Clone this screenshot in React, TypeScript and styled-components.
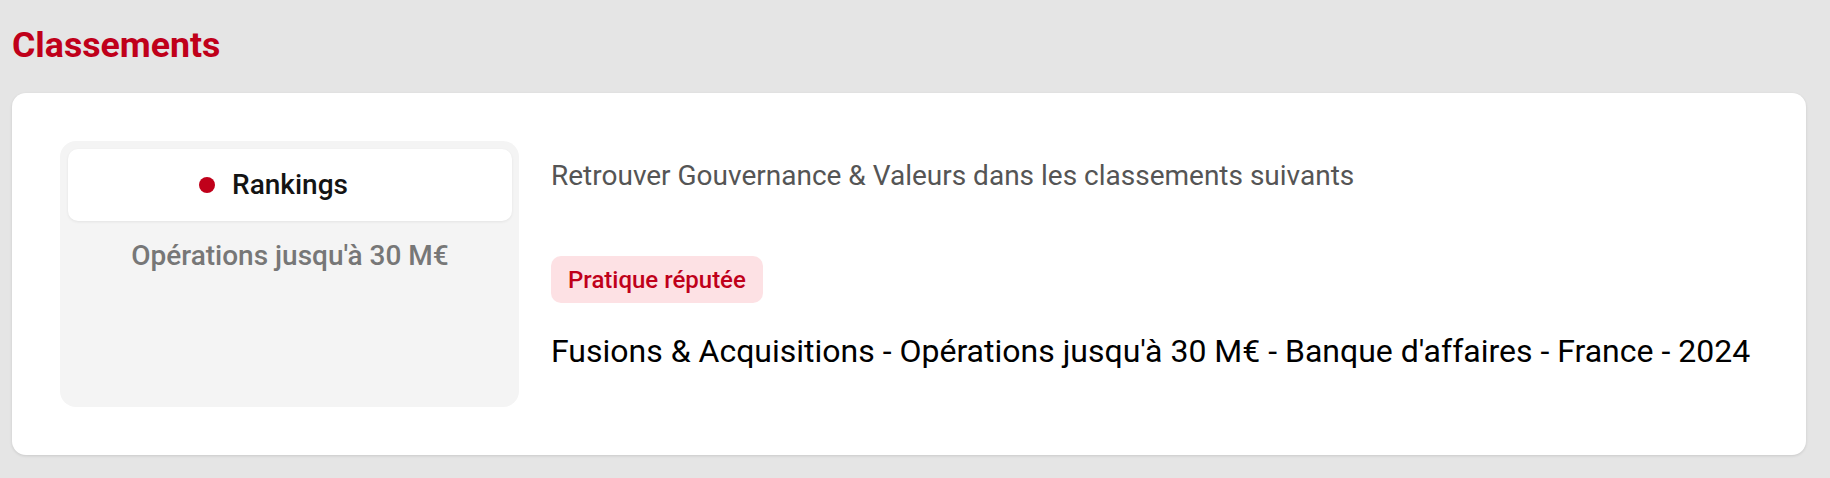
import styled, { createGlobalStyle } from "styled-components";

const GlobalStyle = createGlobalStyle`
  html, body {
    margin: 0;
    padding: 0;
    background: #e5e5e5;
    font-family: Roboto, "Liberation Sans", Arial, sans-serif;
  }
`;

const Page = styled.div`
  padding: 24px 24px 23px 12px;
`;

const Title = styled.h2`
  margin: 0 0 27px;
  font-size: 35.7px;
  line-height: 42px;
  font-weight: 700;
  color: #c0001a;
`;

const Card = styled.section`
  background: #fff;
  border-radius: 14px;
  box-shadow: 0 1px 3px rgba(0, 0, 0, 0.12);
  padding: 48px;
  display: flex;
  gap: 32px;
`;

const Panel = styled.div`
  flex: 0 0 459px;
  box-sizing: border-box;
  min-height: 266px;
  background: #f4f4f4;
  border-radius: 16px;
  padding: 8px 7px 8px 8px;
  display: flex;
  flex-direction: column;
  align-items: stretch;
`;

const PanelHead = styled.div`
  height: 72px;
  background: #fff;
  border-radius: 10px;
  box-shadow: 0 1px 3px rgba(0, 0, 0, 0.07);
  display: flex;
  align-items: center;
  justify-content: center;
`;

const HeadLabel = styled.span`
  position: relative;
  font-size: 28px;
  line-height: 34px;
  font-weight: 500;
  color: #141414;

  &::before {
    content: "";
    position: absolute;
    left: -33px;
    top: 9px;
    width: 16px;
    height: 16px;
    border-radius: 50%;
    background: #c0001a;
  }
`;

const PanelSub = styled.div`
  margin-top: 18px;
  text-align: center;
  font-size: 28px;
  line-height: 34px;
  font-weight: 500;
  color: #777;
`;

const Content = styled.div`
  flex: 1;
  padding-top: 18px;
  display: flex;
  flex-direction: column;
  align-items: flex-start;
`;

const Intro = styled.p`
  margin: 0;
  font-size: 28px;
  line-height: 34px;
  color: #555;
`;

const Tag = styled.span`
  margin-top: 63px;
  padding: 10px 17px 9px;
  border-radius: 10px;
  background: #fde1e4;
  color: #c0001a;
  font-size: 24px;
  line-height: 28px;
  font-weight: 500;
`;

const Entry = styled.p`
  margin: 29px 0 0;
  font-size: 32px;
  line-height: 38px;
  color: #000;
`;

const rankings = [
  {
    label: "Pratique réputée",
    text: "Fusions & Acquisitions - Opérations jusqu'à 30 M€ - Banque d'affaires - France - 2024",
  },
];

export default function App() {
  return (
    <Page>
      <GlobalStyle />
      <Title>Classements</Title>
      <Card>
        <Panel>
          <PanelHead>
            <HeadLabel>Rankings</HeadLabel>
          </PanelHead>
          <PanelSub>Opérations jusqu'à 30 M€</PanelSub>
        </Panel>
        <Content>
          <Intro>Retrouver Gouvernance &amp; Valeurs dans les classements suivants</Intro>
          {rankings.map((r) => (
            <div key={r.label} style={{ display: "contents" }}>
              <Tag>{r.label}</Tag>
              <Entry>{r.text}</Entry>
            </div>
          ))}
        </Content>
      </Card>
    </Page>
  );
}
